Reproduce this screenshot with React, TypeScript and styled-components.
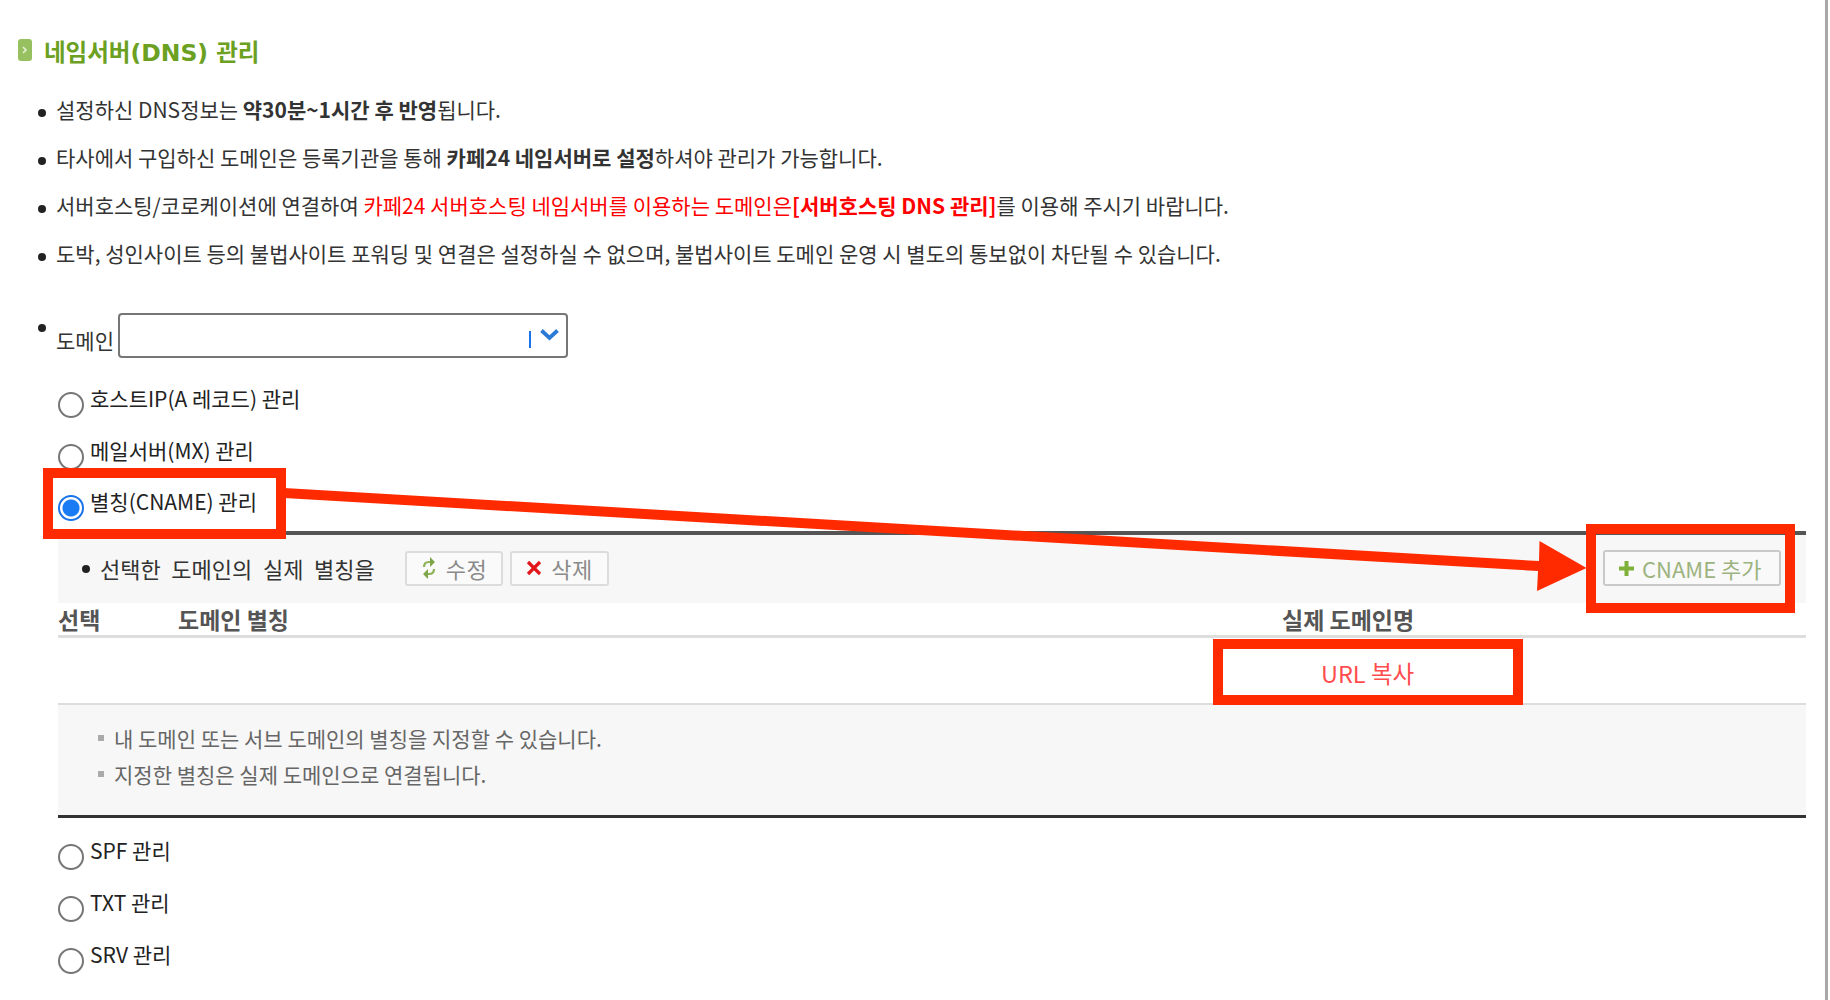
import React from "react";
import styled, { createGlobalStyle } from "styled-components";

const GlobalStyle = createGlobalStyle`
  html, body {
    margin: 0;
    padding: 0;
    background: #fff;
  }
  body {
    font-family: "Noto Sans CJK KR", "Noto Sans", sans-serif;
    color: #333;
  }
`;

const Red = styled.span`
  color: #f00;
`;

const notices = [
  <>설정하신 DNS정보는 <b>약30분~1시간 후 반영</b>됩니다.</>,
  <>타사에서 구입하신 도메인은 등록기관을 통해 <b>카페24 네임서버로 설정</b>하셔야 관리가 가능합니다.</>,
  <>서버호스팅/코로케이션에 연결하여 <Red>카페24 서버호스팅 네임서버를 이용하는 도메인은<b>[서버호스팅 DNS 관리]</b></Red>를 이용해 주시기 바랍니다.</>,
  <>도박, 성인사이트 등의 불법사이트 포워딩 및 연결은 설정하실 수 없으며, 불법사이트 도메인 운영 시 별도의 통보없이 차단될 수 있습니다.</>,
];

const topRadios = [
  { label: "호스트IP(A 레코드) 관리", checked: false },
  { label: "메일서버(MX) 관리", checked: false },
  { label: "별칭(CNAME) 관리", checked: true },
];

const bottomRadios = ["SPF 관리", "TXT 관리", "SRV 관리"];

const App = () => {
  return (
    <Page>
      <GlobalStyle />
      <TitleRow>
        <TitleIcon>
          <svg width="6" height="8" viewBox="0 0 6 8">
            <path d="M1 1l3 3-3 3" fill="none" stroke="#e8f2d8" strokeWidth="1.6" />
          </svg>
        </TitleIcon>
        <Title>네임서버(DNS) 관리</Title>
      </TitleRow>

      <NoticeList>
        {notices.map((notice, i) => (
          <NoticeItem key={i}>{notice}</NoticeItem>
        ))}
      </NoticeList>

      <DomainRow>
        <DomainLabel>도메인</DomainLabel>
        <FakeSelect>
          <Caret />
          <svg width="19" height="13" viewBox="0 0 19 13">
            <path d="M1.500 2.500l8 7.500 8-7.500" fill="none" stroke="#2a7ad6" strokeWidth="3.8" />
          </svg>
        </FakeSelect>
      </DomainRow>

      <RadioGroup $gap={26.5} $top={34}>
        {topRadios.map((r) => (
          <RadioRow key={r.label}>
            <Radio $checked={r.checked} />
            <RadioLabel>{r.label}</RadioLabel>
          </RadioRow>
        ))}
      </RadioGroup>

      <Panel>
        <PanelHead>
          <HeadText>선택한 도메인의 실제 별칭을</HeadText>
          <ToolButton $width={98}>
            <svg width="16" height="24" viewBox="0 0 16 24">
              <path d="M3 11c0-3 2-5 5-5h2M13 13c0 3-2 5-5 5H6" fill="none" stroke="#8db25a" strokeWidth="2.2" />
              <path d="M9 1l5 5-5 5zM7 13l-5 5 5 5z" fill="#7ea648" />
            </svg>
            수정
          </ToolButton>
          <ToolButton $width={99}>
            <svg width="16" height="16" viewBox="0 0 16 16">
              <path d="M2 2l12 12M14 2L2 14" fill="none" stroke="#e3171b" strokeWidth="3.2" />
            </svg>
            삭제
          </ToolButton>
          <AddButton>
            <svg width="17" height="17" viewBox="0 0 17 17">
              <path d="M8.500 1v15M1 8.500h15" fill="none" stroke="#7fb13a" strokeWidth="4" />
            </svg>
            CNAME 추가
          </AddButton>
        </PanelHead>

        <ColumnRow>
          <SelectCol>선택</SelectCol>
          <AliasCol>도메인 별칭</AliasCol>
          <TargetCol>실제 도메인명</TargetCol>
        </ColumnRow>

        <BodyRow>
          <CopyLink>URL 복사</CopyLink>
        </BodyRow>

        <HelpBox>
          <HelpItem>내 도메인 또는 서브 도메인의 별칭을 지정할 수 있습니다.</HelpItem>
          <HelpItem>지정한 별칭은 실제 도메인으로 연결됩니다.</HelpItem>
        </HelpBox>
      </Panel>

      <RadioGroup $gap={27} $top={26}>
        {bottomRadios.map((label) => (
          <RadioRow key={label}>
            <Radio />
            <RadioLabel>{label}</RadioLabel>
          </RadioRow>
        ))}
      </RadioGroup>

      <MarkBox $left={43} $top={468} $width={243} $height={71} />
      <MarkBox $left={1586} $top={524} $width={209} $height={89} />
      <MarkBox $left={1213} $top={639} $width={310} $height={66} />
      <ArrowLayer width="1830" height="1000" viewBox="0 0 1830 1000">
        <polygon
          points="284,488 1539,561 1539.500,541 1586.500,568 1537,591 1538,571 284,498"
          fill="#ff2a00"
        />
      </ArrowLayer>
    </Page>
  );
};

export default App;

const Page = styled.div`
  position: relative;
  width: 1828px;
  height: 1000px;
  overflow: hidden;
  padding-top: 39px;
  box-sizing: border-box;
  background: #fff;
  border-right: 3px solid #a8a8a8;
`;

const TitleRow = styled.div`
  display: flex;
  align-items: center;
  gap: 12px;
  height: 22px;
  padding-left: 18px;
`;

const TitleIcon = styled.div`
  display: flex;
  align-items: center;
  justify-content: center;
  width: 14px;
  height: 22px;
  border-radius: 3px;
  background: #97c160;
`;

const Title = styled.h2`
  margin: 0;
  padding-top: 2px;
  font-family: "DejaVu Sans", "Noto Sans CJK KR", sans-serif;
  font-size: 23.5px;
  font-weight: 700;
  color: #6ba021;
  white-space: nowrap;
`;

const NoticeList = styled.ul`
  margin: 25px 0 0;
  padding: 0 0 0 56px;
  list-style: none;
`;

const NoticeItem = styled.li`
  position: relative;
  height: 48px;
  line-height: 47px;
  font-size: 21px;
  color: #333;
  white-space: nowrap;

  &::before {
    content: "";
    position: absolute;
    left: -18px;
    top: 23px;
    width: 8px;
    height: 8px;
    border-radius: 50%;
    background: #222;
  }
`;

const DomainRow = styled.div`
  position: relative;
  display: flex;
  align-items: flex-end;
  height: 45px;
  margin-top: 35px;
  padding-left: 56px;

  &::before {
    content: "";
    position: absolute;
    left: 38px;
    top: 11px;
    width: 8px;
    height: 8px;
    border-radius: 50%;
    background: #222;
  }
`;

const DomainLabel = styled.span`
  width: 62px;
  font-size: 21px;
  line-height: 35px;
  color: #333;
  white-space: nowrap;
`;

const FakeSelect = styled.div`
  display: flex;
  align-items: flex-start;
  justify-content: flex-end;
  gap: 9px;
  width: 450px;
  height: 45px;
  padding: 13px 7px 0 0;
  box-sizing: border-box;
  border: 2px solid #767676;
  border-radius: 4px;
`;

const Caret = styled.i`
  display: block;
  width: 2px;
  height: 17px;
  margin-top: 3px;
  background: #1a73e8;
`;

const RadioGroup = styled.div<{ $gap: number; $top: number }>`
  display: flex;
  flex-direction: column;
  gap: ${({ $gap }) => $gap}px;
  margin-top: ${({ $top }) => $top}px;
  padding-left: 58px;
`;

const RadioRow = styled.label`
  display: flex;
  gap: 6px;
  height: 25px;
`;

const Radio = styled.span<{ $checked?: boolean }>`
  flex: none;
  width: 26px;
  height: 26px;
  box-sizing: border-box;
  border-radius: 50%;
  border: 2px solid ${({ $checked }) => ($checked ? "#1a73e8" : "#767676")};
  background: ${({ $checked }) =>
    $checked
      ? "radial-gradient(circle, #1a7cf5 0 8px, #fff 9px)"
      : "#fff"};
`;

const RadioLabel = styled.span`
  font-size: 21px;
  line-height: 25px;
  margin-top: -6px;
  height: 25px;
  color: #222;
  white-space: nowrap;
`;

const Panel = styled.section`
  width: 1748px;
  margin: 11px 0 0 58px;
  border-top: 4px solid #555;
  border-bottom: 3px solid #333;
`;

const PanelHead = styled.div`
  display: flex;
  align-items: center;
  height: 68px;
  padding: 0 0 2px 24px;
  box-sizing: border-box;
  background: #f7f7f7;
`;

const HeadText = styled.span`
  position: relative;
  width: 323px;
  padding-left: 18px;
  box-sizing: border-box;
  font-size: 22px;
  word-spacing: 5.7px;
  color: #333;
  white-space: nowrap;

  &::before {
    content: "";
    position: absolute;
    left: 0;
    top: 13px;
    width: 8px;
    height: 8px;
    border-radius: 50%;
    background: #222;
  }
`;

const ToolButton = styled.button<{ $width: number }>`
  display: flex;
  align-items: center;
  justify-content: center;
  gap: 9px;
  width: ${({ $width }) => $width}px;
  height: 35px;
  margin-right: 7px;
  padding: 0;
  border: 2px solid #dcdcdc;
  border-radius: 3px;
  background: #fafafa;
  font-family: inherit;
  font-size: 22px;
  letter-spacing: 0.5px;
  color: #8a8a8a;
`;

const AddButton = styled.button`
  display: flex;
  align-items: center;
  gap: 7px;
  width: 178px;
  height: 36px;
  margin-left: auto;
  margin-right: 25px;
  padding: 0 0 0 13px;
  border: 2px solid #c9c9c9;
  border-radius: 3px;
  background: #f9f9f9;
  font-family: inherit;
  font-size: 22px;
  color: #9db37f;
  white-space: nowrap;
`;

const ColumnRow = styled.div`
  display: flex;
  align-items: center;
  height: 32px;
  border-bottom: 3px solid #ddd;
  font-size: 23px;
  font-weight: 700;
  color: #555;
`;

const SelectCol = styled.span`
  width: 120px;
`;

const AliasCol = styled.span`
  width: 1104px;
`;

const TargetCol = styled.span`
  white-space: nowrap;
`;

const BodyRow = styled.div`
  display: flex;
  align-items: center;
  height: 67px;
  padding: 4px 0 0 1263px;
  box-sizing: border-box;
  border-bottom: 2px solid #ddd;
`;

const CopyLink = styled.span`
  font-size: 23.5px;
  color: #ff4d4d;
`;

const HelpBox = styled.div`
  height: 110px;
  padding: 15px 0 0 56px;
  box-sizing: border-box;
  background: #f7f7f7;
`;

const HelpItem = styled.p`
  position: relative;
  height: 36px;
  margin: 0;
  line-height: 36px;
  font-size: 21px;
  color: #666;

  &::before {
    content: "";
    position: absolute;
    left: -16px;
    top: 15px;
    width: 6px;
    height: 6px;
    background: #aaa;
  }
`;

const MarkBox = styled.div<{ $left: number; $top: number; $width: number; $height: number }>`
  position: absolute;
  left: ${({ $left }) => $left}px;
  top: ${({ $top }) => $top}px;
  width: ${({ $width }) => $width}px;
  height: ${({ $height }) => $height}px;
  box-sizing: border-box;
  border: 10px solid #ff2a00;
`;

const ArrowLayer = styled.svg`
  position: absolute;
  left: 0;
  top: 0;
  pointer-events: none;
`;
